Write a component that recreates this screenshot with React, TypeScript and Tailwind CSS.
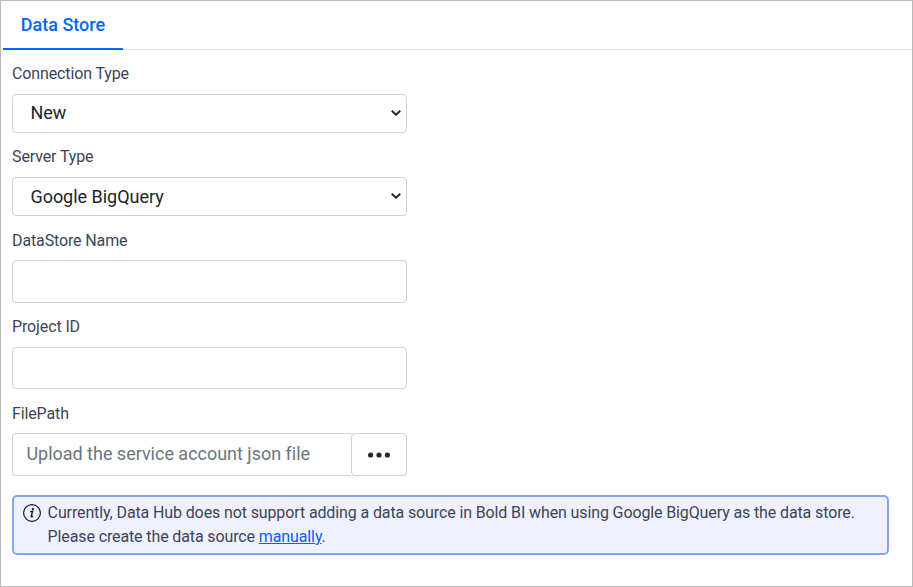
import type { ReactNode } from "react";

const control =
  "block w-full rounded-[4px] border border-[#ced4da] bg-white text-[18px] text-[#212529] outline-none placeholder:text-[#6c757d] placeholder:opacity-100";

function Field({ label, className, children }: { label: string; className: string; children: ReactNode }) {
  return (
    <div className={`flex w-[395px] flex-col justify-between ${className}`}>
      <label className="text-[16px] leading-6 tracking-[-0.125px] text-[#3b4458]">{label}</label>
      {children}
    </div>
  );
}

function Select({ value, className }: { value: string; className: string }) {
  return (
    <div className="relative">
      <select className={`${control} h-[39px] appearance-none pl-[17.4px] tracking-[-0.02px] ${className}`}>
        <option>{value}</option>
      </select>
      <svg
        width="10"
        height="6"
        viewBox="0 0 10 6"
        fill="none"
        className="pointer-events-none absolute right-[6px] top-[16.3px]"
      >
        <path d="M.7.8L5 4.8 9.3.8" stroke="#212529" strokeWidth="1.9" />
      </svg>
    </div>
  );
}

function InfoIcon() {
  return (
    <svg width="18" height="18" viewBox="0 0 18 18" className="mt-[7px] shrink-0" fill="none">
      <circle cx="9" cy="9" r="8.4" stroke="#161a22" strokeWidth="1.2" />
      <circle cx="9.9" cy="5.1" r="1.15" fill="#161a22" />
      <path d="M7.2 7.7l2.4-.3-1.4 5c-.1.7.6.6 1.8-.5" stroke="#161a22" strokeWidth="1.4" />
    </svg>
  );
}

export default function App() {
  return (
    <div className="h-[587px] w-[913px] border border-[#bababa] bg-white font-['Roboto',sans-serif]">
      <div className="flex h-[49px] items-stretch pl-[2px]">
        <button className="w-[120px] border-b-2 border-[#0565ff] text-[18px] font-medium text-[#0565ff]">
          Data Store
        </button>
        <div className="flex-1 border-b border-[#dee2e6]" />
      </div>

      <form className="flex flex-col pl-[11px] pt-[12px]">
        <Field label="Connection Type" className="h-[71px]">
          <Select value="New" className="pb-[2px]" />
        </Field>
        <Field label="Server Type" className="mt-[12px] h-[71px]">
          <Select value="Google BigQuery" className="" />
        </Field>
        <Field label="DataStore Name" className="mt-[13px] h-[74px]">
          <input className={`${control} h-[43px] px-[13px]`} />
        </Field>
        <Field label="Project ID" className="mt-[12px] h-[74px]">
          <input className={`${control} h-[42px] px-[13px]`} />
        </Field>
        <Field label="FilePath" className="mt-[13px] h-[74px]">
          <div className="flex h-[43px]">
            <input
              className={`${control} min-w-0 flex-1 rounded-r-none border-r-0 pb-[2px] pl-[13.4px] tracking-[-0.015px]`}
              placeholder="Upload the service account json file"
            />
            <button
              type="button"
              aria-label="Browse"
              className="flex w-[56px] items-center justify-center rounded-[4px] border border-[#ced4da] pr-[0.6px]"
            >
              <svg width="24" height="6" viewBox="0 0 24 6" fill="#262a2e">
                <circle cx="3.6" cy="3" r="2.6" />
                <circle cx="12" cy="3" r="2.6" />
                <circle cx="20.4" cy="3" r="2.6" />
              </svg>
            </button>
          </div>
        </Field>

        <div className="mt-[19px] flex h-[60px] w-[877px] gap-[6.6px] rounded-[5px] border-2 border-[#86a3f0] bg-[#f0f1ff] pl-[9px]">
          <InfoIcon />
          <p className="mt-[4px] text-[16px] leading-6 tracking-[-0.12px] text-[#3b4458]">
            Currently, Data Hub does not support adding a data source in Bold BI when using Google BigQuery as the data
            store.
            <br />
            Please create the data source{" "}
            <a href="#" className="text-[#0d5dfd] underline">
              manually
            </a>
            .
          </p>
        </div>
      </form>
    </div>
  );
}
